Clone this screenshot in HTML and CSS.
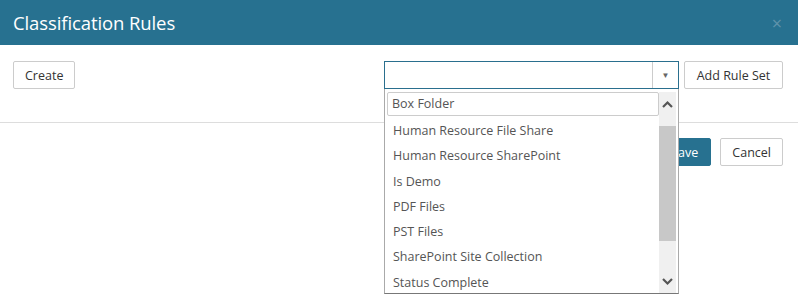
FILE: index.html
```html
<!DOCTYPE html>
<html lang="en">
<head>
  <meta charset="UTF-8">
  <title>Classification Rules</title>
  <link rel="stylesheet" href="styles.css">
</head>
<body>

<div class="modal">
  <div class="modal-header">
    <h1>Classification Rules</h1>
    <span class="close">&times;</span>
  </div>

  <div class="toolbar">
    <button class="btn">Create</button>
    <div class="toolbar-right">
      <div class="combo">
        <div class="combo-input">
          <span class="combo-arrow">&#9660;</span>
        </div>
        <!-- open dropdown list -->
        <div class="combo-list">
          <div class="combo-items">
            <div class="combo-item selected">Box Folder</div>
            <div class="combo-item">Human Resource File Share</div>
            <div class="combo-item">Human Resource SharePoint</div>
            <div class="combo-item">Is Demo</div>
            <div class="combo-item">PDF Files</div>
            <div class="combo-item">PST Files</div>
            <div class="combo-item">SharePoint Site Collection</div>
            <div class="combo-item">Status Complete</div>
          </div>
          <div class="scrollbar">
            <svg class="scroll-btn" width="17" height="22" viewBox="0 0 17 22"><path d="M4 15 L8.5 10.5 L13 15" fill="none" stroke="#555" stroke-width="2.2"/></svg>
            <div class="scroll-track"><div class="scroll-thumb"></div></div>
            <svg class="scroll-btn" width="17" height="22" viewBox="0 0 17 22"><path d="M4 8 L8.5 12.5 L13 8" fill="none" stroke="#555" stroke-width="2.2"/></svg>
          </div>
        </div>
      </div>
      <button class="btn btn-wide">Add Rule Set</button>
    </div>
  </div>

  <div class="footer">
    <button class="btn btn-primary">Save</button>
    <button class="btn">Cancel</button>
  </div>
</div>

</body>
</html>
```

FILE: styles.css
```css
/* Classification rules dialog */
html, body {
  height: 100%;
}
body {
  font-family: 'Open Sans', 'Noto Sans', sans-serif;
  margin: 0;
  padding: 0;
  background-color: #fff;
  color: #333;
}
.modal {
  width: 798px;
  min-height: 296px;
}
.modal-header {
  display: flex;
  justify-content: space-between;
  align-items: center;
  height: 45px;
  padding: 0 16px 0 13px;
  box-sizing: border-box;
  background-color: #277190;
  color: #fff;
}
.modal-header h1 {
  margin: 0;
  font-size: 18.5px;
  font-weight: normal;
  letter-spacing: -0.1px;
}
.close {
  font-size: 18px;
  color: #5f93ab;
  line-height: 1;
}
.toolbar {
  display: flex;
  justify-content: space-between;
  align-items: flex-start;
  padding: 16px 15px 33px 13px;
  border-bottom: 1px solid #ddd;
}
.toolbar-right {
  display: flex;
  gap: 5px;
}
.btn {
  height: 28px;
  padding: 0 11px;
  font-family: inherit;
  font-size: 12.5px;
  color: #333;
  background-color: #fff;
  border: 1px solid #ccc;
  border-radius: 2px;
}
.btn-wide {
  width: 99px;
}
.btn-primary {
  background-color: #277190;
  border-color: #277190;
  color: #fff;
  padding: 0 12px;
}
.combo {
  position: relative;
  width: 295px;
}
.combo-input {
  display: flex;
  justify-content: flex-end;
  height: 28px;
  box-sizing: border-box;
  border: 1px solid #2a6f8e;
}
.combo-arrow {
  width: 25px;
  border-left: 1px solid #ccc;
  font-size: 8px;
  color: #666;
  text-align: center;
  line-height: 26px;
}
.combo-list {
  position: absolute;
  top: 28px;
  left: 0;
  width: 295px;
  height: 205px;
  box-sizing: border-box;
  display: flex;
  background-color: #fff;
  border: 1px solid #aaa;
  border-top: none;
  border-bottom-color: #777;
  overflow: hidden;
  z-index: 2;
}
.combo-items {
  flex: 1;
  padding: 3px 0 0 2px;
}
.combo-item {
  height: 25.3px;
  line-height: 25px;
  padding-left: 6px;
  font-size: 12.5px;
  color: #555;
}
.combo-item.selected {
  height: 24px;
  line-height: 22px;
  padding-left: 4px;
  margin-bottom: 2px;
  box-sizing: border-box;
  border: 1px solid #ccc;
  border-radius: 2px;
}
.scrollbar {
  display: flex;
  flex-direction: column;
  width: 17px;
  margin: 3px 2px 0 0;
  background-color: #f0f0f0;
}
.scroll-btn {
  display: block;
  flex: none;
}
.scroll-track {
  flex: 1;
  padding: 12px 0 0 0;
}
.scroll-thumb {
  height: 115px;
  background-color: #c8c8c8;
}
.footer {
  display: flex;
  justify-content: flex-end;
  gap: 9px;
  padding: 15px 15px 0 0;
}
```
